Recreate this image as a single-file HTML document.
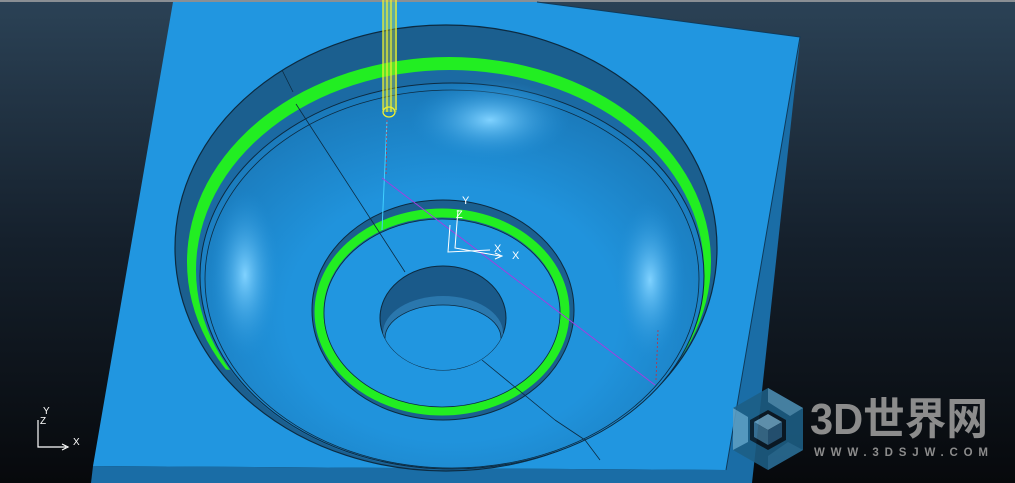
<!DOCTYPE html>
<html><head><meta charset="utf-8"><style>
html,body{margin:0;padding:0;width:1015px;height:483px;overflow:hidden;background:#0d1117}
svg{display:block}
</style></head><body>
<svg width="1015" height="483" viewBox="0 0 1015 483" xmlns="http://www.w3.org/2000/svg">
<defs>
<linearGradient id="bg" x1="0" y1="0" x2="0" y2="1">
<stop offset="0" stop-color="#2b4256"/><stop offset="0.5" stop-color="#15202c"/><stop offset="1" stop-color="#07090c"/>
</linearGradient>
<radialGradient id="h1" cx="0.5" cy="0.5" r="0.5"><stop offset="0" stop-color="#80d2ff"/><stop offset="1" stop-color="#2090d8" stop-opacity="0"/></radialGradient>
<radialGradient id="dome" cx="0.5" cy="0.6" r="0.6"><stop offset="0.55" stop-color="#2093dc"/><stop offset="1" stop-color="#1a78b8"/></radialGradient>
<clipPath id="hole"><ellipse cx="443" cy="318" rx="63" ry="52"/></clipPath>
<clipPath id="gclip"><polygon points="0,0 1015,0 1015,430 690,415 180,365 0,365"/></clipPath>
</defs>
<rect width="1015" height="483" fill="url(#bg)"/>
<rect width="1015" height="2" fill="#8a8f94"/>
<!-- block faces -->
<polygon points="800,37 800,40 752,483 724,483 726,470" fill="#1a6da6"/>
<polygon points="93,466 726,470 735,483 91,483" fill="#1a6da6"/>
<polygon points="173,2 537,2 800,37 726,470 93,466" fill="#2196e0"/>
<polyline points="537,2 800,37 726,470" fill="none" stroke="#0f3a5a" stroke-width="1"/>
<!-- pocket -->
<ellipse cx="446" cy="248" rx="271" ry="223" fill="#1b5f8f" stroke="#0c2a40" stroke-width="1.2"/>
<g clip-path="url(#gclip)"><ellipse cx="449" cy="262" rx="262" ry="205" fill="#22ee22"/></g>
<ellipse cx="450" cy="270" rx="254" ry="200" fill="#1b6aa3"/>
<ellipse cx="452" cy="276" rx="252" ry="193" fill="url(#dome)" stroke="#0c2a40" stroke-width="1"/>
<ellipse cx="452" cy="279" rx="247" ry="189" fill="none" stroke="#0c2a40" stroke-width="0.8"/>
<ellipse cx="490" cy="120" rx="80" ry="40" fill="url(#h1)"/>
<ellipse cx="245" cy="275" rx="35" ry="85" fill="url(#h1)"/>
<ellipse cx="650" cy="280" rx="35" ry="80" fill="url(#h1)"/>
<!-- radial lines -->
<line x1="282" y1="70" x2="293" y2="92" stroke="#0c2a40" stroke-width="0.8"/>
<line x1="296" y1="104" x2="405" y2="272" stroke="#0c2a40" stroke-width="0.8"/>
<line x1="494" y1="286" x2="540" y2="258" stroke="#0c2a40" stroke-width="0.8"/>
<line x1="585" y1="440" x2="600" y2="460" stroke="#0c2a40" stroke-width="0.8"/>
<!-- inner ring -->
<ellipse cx="443" cy="310" rx="131" ry="110" fill="#1b5f8f" stroke="#0c2a40" stroke-width="1"/>
<ellipse cx="442" cy="312" rx="123" ry="99" fill="none" stroke="#22ee22" stroke-width="9"/>
<ellipse cx="442" cy="313" rx="118" ry="94" fill="#2196e0" stroke="#0c2a40" stroke-width="0.8"/>
<line x1="370" y1="218" x2="405" y2="272" stroke="#0c2a40" stroke-width="0.8"/>
<line x1="482" y1="360" x2="555" y2="420" stroke="#0c2a40" stroke-width="0.8"/>
<line x1="555" y1="420" x2="585" y2="440" stroke="#0c2a40" stroke-width="0.8"/>
<!-- hole -->
<ellipse cx="443" cy="318" rx="63" ry="52" fill="#1a5a8a" stroke="#0c2a40" stroke-width="1"/>
<g clip-path="url(#hole)">
<ellipse cx="443" cy="333" rx="60" ry="37" fill="#2a77ad"/>
<ellipse cx="443" cy="338" rx="58" ry="33" fill="#2196e0" stroke="#0c2a40" stroke-width="0.8"/>
</g>
<!-- tool -->
<rect x="383" y="0" width="14" height="112" fill="#c8d840" opacity="0.35"/>
<g stroke="#eef030" stroke-width="1.3" fill="none">
<line x1="383" y1="0" x2="383" y2="110"/><line x1="387" y1="0" x2="387" y2="112"/>
<line x1="391" y1="0" x2="391" y2="112"/><line x1="396" y1="0" x2="396" y2="110"/>
<ellipse cx="389" cy="112" rx="6" ry="5"/>
</g>
<line x1="387" y1="120" x2="382" y2="230" stroke="#40d0ff" stroke-width="1"/>
<line x1="387" y1="120" x2="386" y2="175" stroke="#c03040" stroke-width="0.8" stroke-dasharray="2,2"/>
<line x1="382" y1="178" x2="655" y2="385" stroke="#a040e0" stroke-width="1"/>
<line x1="658" y1="330" x2="656" y2="380" stroke="#c03040" stroke-width="0.8" stroke-dasharray="2,2"/>
<!-- center axes -->
<g stroke="#fff" stroke-width="1" fill="none">
<polyline points="458,210 455,248 500,256"/><polyline points="450,225 448,252 490,250"/>
<polyline points="495,253 502,256 495,259"/>
</g>
<g fill="#fff" font-family="Liberation Sans,sans-serif" font-size="11">
<text x="462" y="204">Y</text><text x="456" y="218">Z</text><text x="494" y="252">X</text><text x="512" y="259">X</text>
</g>
<!-- corner axes -->
<g stroke="#fff" stroke-width="1.2" fill="none">
<polyline points="38,420 38,447 66,447"/><polyline points="62,444 68,447 62,450"/>
</g>
<g fill="#fff" font-family="Liberation Sans,sans-serif" font-size="10">
<text x="43" y="414">Y</text><text x="40" y="424">Z</text><text x="73" y="445">X</text>
</g>
<!-- logo -->
<g opacity="0.88">
<polygon points="768,388 803,408 803,450 768,470 733,450 733,408" fill="#1d5f86"/>
<polygon points="768,388 803,408 790,416 768,402" fill="#4d8fb4"/>
<polygon points="733,408 748,417 748,442 733,450" fill="#5e9ec2"/>
<polygon points="803,450 788,442 768,456 768,470" fill="#2b6f98"/>
<polygon points="768,410 786,420 786,440 768,450 750,440 750,420" fill="#0b1a26"/>
<polygon points="768,414 782,422 768,430 754,422" fill="#6aa0bf"/>
<polygon points="754,422 768,430 768,445 754,437" fill="#3a6f90"/>
<polygon points="782,422 768,430 768,445 782,437" fill="#27577a"/>
</g>
<text x="810" y="434" fill="#8c8c8c" font-family="Liberation Sans,'Noto Sans CJK SC',sans-serif" font-weight="bold" font-size="44" textLength="178" lengthAdjust="spacingAndGlyphs">3D世界网</text>
<text x="814" y="456" fill="#8c8c8c" font-family="Liberation Sans,sans-serif" font-weight="bold" font-size="11.5" textLength="174" lengthAdjust="spacing">WWW.3DSJW.COM</text>
</svg>
</body></html>
